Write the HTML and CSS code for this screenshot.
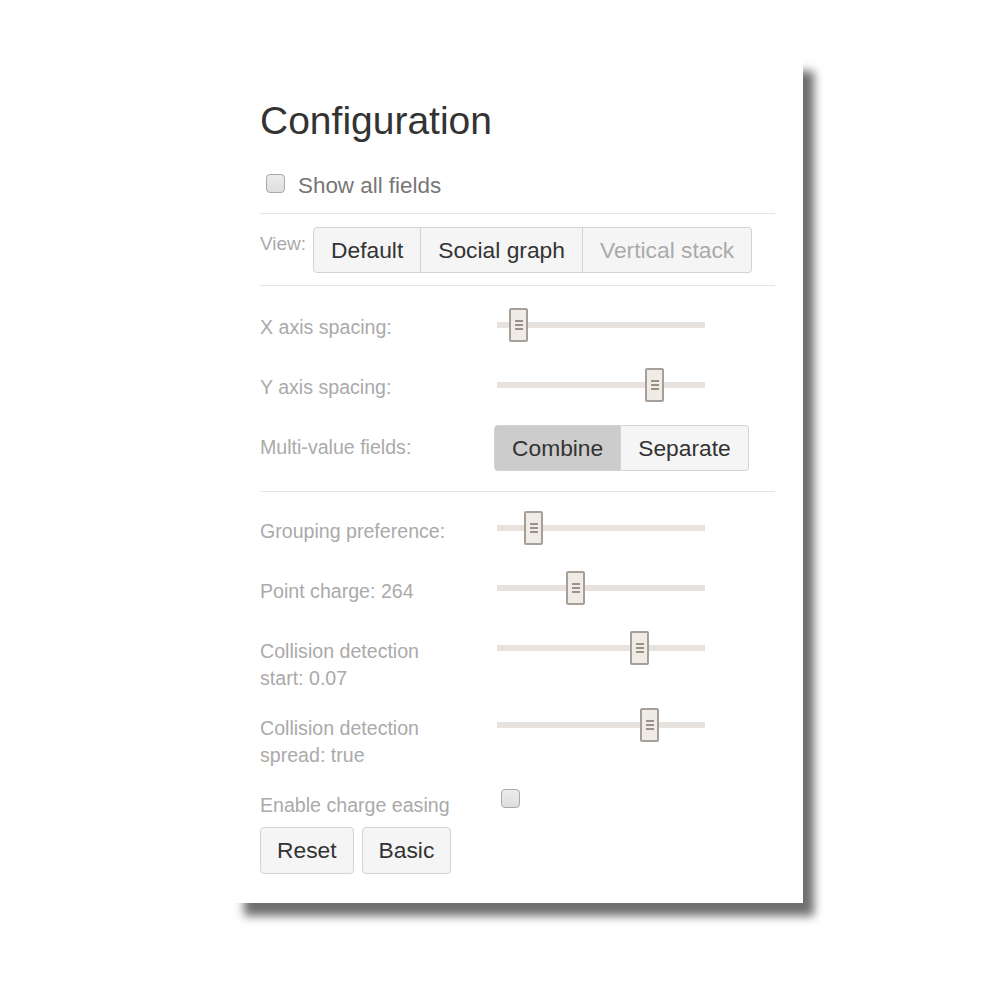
FILE: index.html
```html
<!DOCTYPE html>
<html lang="en">
<head>
    <meta charset="UTF-8">
    <meta name="viewport" content="width=device-width, initial-scale=1.0">
    <title>Configuration</title>
    <link rel="stylesheet" href="styles.css">
</head>
<body>
    <div class="config-panel">
        <h2 class="config-title">Configuration</h2>

        <label class="show-all">
            <span class="checkbox"></span>
            <span>Show all fields</span>
        </label>

        <hr class="divider">

        <div class="view-row">
            <span class="view-label">View:</span>
            <div class="btn-group">
                <button class="btn">Default</button>
                <button class="btn">Social graph</button>
                <button class="btn disabled">Vertical stack</button>
            </div>
        </div>

        <hr class="divider">

        <div class="section first">
            <div class="field-row">
                <span class="field-label">X axis spacing:</span>
                <div class="slider"><span class="handle" style="left: 12px"></span></div>
            </div>
            <div class="field-row">
                <span class="field-label">Y axis spacing:</span>
                <div class="slider"><span class="handle" style="left: 148px"></span></div>
            </div>
            <div class="field-row last">
                <span class="field-label">Multi-value fields:</span>
                <div class="btn-group shifted">
                    <button class="btn active">Combine</button>
                    <button class="btn">Separate</button>
                </div>
            </div>
        </div>

        <hr class="divider">

        <div class="section second">
            <div class="field-row">
                <span class="field-label">Grouping preference:</span>
                <div class="slider"><span class="handle" style="left: 27px"></span></div>
            </div>
            <div class="field-row">
                <span class="field-label">Point charge: 264</span>
                <div class="slider"><span class="handle" style="left: 69px"></span></div>
            </div>
            <div class="field-row">
                <span class="field-label">Collision detection<br>start: 0.07</span>
                <div class="slider"><span class="handle" style="left: 133px"></span></div>
            </div>
            <div class="field-row">
                <span class="field-label">Collision detection<br>spread: true</span>
                <div class="slider"><span class="handle" style="left: 143px"></span></div>
            </div>
            <div class="field-row check-row">
                <span class="field-label">Enable charge easing</span>
                <span class="checkbox"></span>
            </div>
        </div>

        <div class="actions">
            <button class="btn single">Reset</button>
            <button class="btn single">Basic</button>
        </div>
    </div>
</body>
</html>
```

FILE: styles.css
```css
body {
    margin: 0;
    padding-bottom: 60px;
    background-color: #ffffff;
    font-family: "Liberation Sans", Arial, sans-serif;
}
.config-panel {
    box-sizing: border-box;
    width: 570px;
    height: 845px;
    margin: 58px 0 0 233px;
    padding: 40px 28px 0 27px;
    background-color: #ffffff;
    box-shadow: 11px 13px 9px #6f6f6f;
}
.config-title {
    margin: 0;
    font-size: 39px;
    line-height: 46px;
    font-weight: normal;
    color: #333333;
}
.show-all {
    display: flex;
    align-items: flex-start;
    height: 36px;
    margin: 24px 0 9px 0;
    font-size: 22.4px;
    line-height: 36px;
    color: #777777;
}
.show-all .checkbox {
    margin: 6px 13px 0 6px;
}
.checkbox {
    display: inline-block;
    box-sizing: border-box;
    width: 19px;
    height: 19px;
    border: 1.5px solid #a9a9a9;
    border-radius: 4px;
    background: linear-gradient(#ececec, #dedede);
}
.divider {
    margin: 0;
    border: none;
    border-top: 1px solid #e6e6e6;
}
.view-row {
    display: flex;
    align-items: flex-start;
    padding: 13px 0 12px 0;
}
.view-label {
    width: 53px;
    margin-top: 3px;
    font-size: 19px;
    line-height: 27px;
    color: #aaaaaa;
}
.btn-group {
    display: flex;
}
.btn {
    margin: 0;
    padding: 9px 17px;
    font-family: "Liberation Sans", Arial, sans-serif;
    font-size: 22.8px;
    line-height: 26px;
    color: #333333;
    background-color: #f5f5f5;
    border: 1px solid #d3d3d3;
    border-radius: 4px;
}
.btn-group .btn {
    border-radius: 0;
    border-left: none;
}
.btn-group .btn:first-child {
    border-left: 1px solid #d3d3d3;
    border-radius: 4px 0 0 4px;
}
.btn-group .btn:last-child {
    border-radius: 0 4px 4px 0;
}
.btn.disabled {
    color: #aaaaaa;
}
.btn.active {
    background-color: #cccccc;
}
.btn-group.shifted {
    margin: -9.5px 0 0 -3px;
}
.section.first {
    padding: 28px 0 19.5px 0;
}
.section.second {
    padding: 26px 0 0 0;
}
.field-row {
    display: grid;
    grid-template-columns: 237px 208px;
    align-items: start;
    min-height: 37px;
    margin-bottom: 23px;
}
.field-row.last {
    margin-bottom: 0;
}
.field-label {
    font-size: 19.6px;
    line-height: 27px;
    color: #aaaaaa;
}
.slider {
    position: relative;
    height: 6px;
    margin-top: 7.5px;
    background-color: #e7e2dd;
}
.handle {
    position: absolute;
    top: -14px;
    box-sizing: border-box;
    width: 19px;
    height: 34px;
    background-color: #efece7;
    border: 2px solid #a79f97;
    border-radius: 2px;
}
.handle::after {
    content: "";
    position: absolute;
    left: 3.5px;
    top: 14px;
    width: 8px;
    height: 2px;
    background-color: #9b9189;
    box-shadow: 0 -4px 0 #9b9189, 0 4px 0 #9b9189;
}
.check-row {
    min-height: 27px;
    margin-bottom: 8px;
}
.check-row .checkbox {
    margin: -3px 0 0 4px;
}
.actions {
    display: flex;
    gap: 8px;
}
.btn.single {
    padding: 9.5px 16px;
}
```
